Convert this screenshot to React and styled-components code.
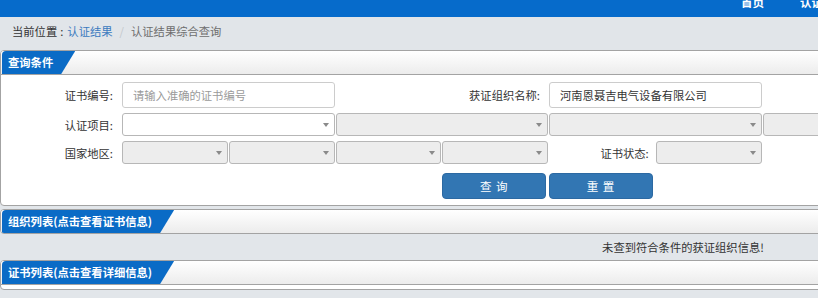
import React from "react";
import styled, { createGlobalStyle } from "styled-components";

const Global = createGlobalStyle`
  html, body { margin: 0; padding: 0; overflow: hidden; background: #e2e6ea; }
  body { font-family: "Noto Sans CJK SC", "Microsoft YaHei", "Liberation Sans", sans-serif; font-size: 11.3px; color: #333; }
  * { box-sizing: border-box; }
`;

const Page = styled.div`
  width: 1366px;
  background: #e2e6ea;
  min-height: 298px;
`;

const TopBar = styled.div`
  height: 17px;
  background: #066bcb;
  overflow: hidden;
  display: flex;
  padding-left: 723px;
`;

const NavItem = styled.div`
  color: #fff;
  font-size: 11.5px;
  font-weight: bold;
  line-height: 16px;
  margin-top: -6px;
  padding: 0 18px;
  white-space: nowrap;
`;

const Crumbs = styled.div`
  height: 33px;
  display: flex;
  align-items: center;
  padding: 0 0 5px 12px;
  background: #e1e5e9;
  color: #333;
  line-height: 16px;
`;

const Colon = styled.span`
  padding: 0 4px 0 3px;
`;

const CrumbLink = styled.span`
  color: #3b7bbf;
`;

const Sep = styled.span`
  color: #c4c8cc;
  margin: 0 7px;
`;

const CrumbCurrent = styled.span`
  color: #6e6e6e;
`;

const Panel = styled.div`
  border: 1px solid #a3a3a3;
  border-radius: 4px;
  background: #fff;
  margin-bottom: ${(p) => p.$mb || 0}px;
  overflow: hidden;
`;

const PanelHead = styled.div`
  height: ${(p) => (p.$last ? 23 : 24)}px;
  border-bottom: ${(p) => (p.$last ? "none" : "1px solid #a3a3a3")};
  background: linear-gradient(#ffffff, #ececec);
  display: flex;
`;

const Tab = styled.div`
  height: 23px;
  margin-left: 1px;
  padding: 0 22px 0 6px;
  background: #0a6bc6;
  color: #fff;
  font-weight: bold;
  line-height: 23px;
  white-space: nowrap;
  border-top-left-radius: 4px;
  clip-path: polygon(0 0, 100% 0, calc(100% - 14px) 100%, 0 100%);
`;

const Body = styled.div`
  padding: ${(p) => p.$pad || "7px 0 6px 0"};
`;

const FormGrid = styled.div`
  display: grid;
  grid-template-columns: 121px repeat(8, 106.75px);
  grid-template-rows: 26px 23px 23px 30px;
  row-gap: 5px;
`;

const Label = styled.div`
  grid-column: span ${(p) => p.$span || 1};
  display: flex;
  align-items: center;
  justify-content: flex-end;
  padding-right: ${(p) => p.$pr || 9}px;
  color: #333;
  white-space: nowrap;
`;

const TextInput = styled.input`
  grid-column: span ${(p) => p.$span || 2};
  height: 26px;
  width: calc(100% - 1px);
  border: 1px solid #cccccc;
  border-radius: 3px;
  padding: 0 10px;
  font: inherit;
  color: #333;
  outline: none;
  &::placeholder { color: #9a9a9a; }
`;

const SelectWrap = styled.div`
  grid-column: span ${(p) => p.$span || 2};
  position: relative;
  height: 23px;
  margin-right: 1px;
  &::after {
    content: "";
    position: absolute;
    right: 6px;
    top: 10px;
    border-left: 3px solid transparent;
    border-right: 3px solid transparent;
    border-top: 4px solid #8a8a8a;
    pointer-events: none;
  }
`;

const Select = styled.select`
  appearance: none;
  -webkit-appearance: none;
  width: 100%;
  height: 23px;
  border: 1px solid #b7b7b7;
  border-radius: 3px;
  background: ${(p) => (p.disabled ? "#ededed" : "#fff")};
  font: inherit;
  opacity: 1;
  color: #333;
`;

const Spacer = styled.div`
  grid-column: span ${(p) => p.$span || 1};
`;

const Button = styled.button`
  align-self: end;
  height: 26px;
  width: 104px;
  background: #3276b3;
  border: 1px solid #2c69a2;
  border-radius: 4px;
  color: #fff;
  font: inherit;
  font-size: 11.5px;
  letter-spacing: 1px;
  padding: 0;
`;

const Message = styled.div`
  height: 26px;
  display: flex;
  align-items: center;
  justify-content: center;
  color: #333;
`;

function Sel({ span, disabled }) {
  return (
    <SelectWrap $span={span}>
      <Select disabled={disabled}>
        <option></option>
      </Select>
    </SelectWrap>
  );
}

export default function App() {
  return (
    <>
      <Global />
      <Page>
        <TopBar>
          <NavItem>首页</NavItem>
          <NavItem>认证结果</NavItem>
          <NavItem>认证机构</NavItem>
        </TopBar>
        <Crumbs>
          当前位置<Colon>:</Colon>
          <CrumbLink>认证结果</CrumbLink>
          <Sep>/</Sep>
          <CrumbCurrent>认证结果综合查询</CrumbCurrent>
        </Crumbs>

        <Panel $mb={3}>
          <PanelHead>
            <Tab>查询条件</Tab>
          </PanelHead>
          <Body>
            <FormGrid>
              <Label>证书编号:</Label>
              <TextInput placeholder="请输入准确的证书编号" />
              <Label $span={2}>获证组织名称:</Label>
              <TextInput defaultValue="河南恩聂吉电气设备有限公司" />
              <Spacer $span={2} />

              <Label>认证项目:</Label>
              <Sel span={2} />
              <Sel span={2} disabled />
              <Sel span={2} disabled />
              <Sel span={2} disabled />

              <Label>国家地区:</Label>
              <Sel span={1} disabled />
              <Sel span={1} disabled />
              <Sel span={1} disabled />
              <Sel span={1} disabled />
              <Label $pr={7}>证书状态:</Label>
              <Sel span={1} disabled />
              <Spacer $span={2} />

              <Spacer $span={4} />
              <Button>查 询</Button>
              <Button>重 置</Button>
            </FormGrid>
          </Body>
        </Panel>

        <Panel>
          <PanelHead $last>
            <Tab>组织列表(点击查看证书信息)</Tab>
          </PanelHead>
        </Panel>

        <Message>未查到符合条件的获证组织信息!</Message>

        <Panel>
          <PanelHead>
            <Tab>证书列表(点击查看详细信息)</Tab>
          </PanelHead>
          <Body $pad="4px 0 0 0" />
        </Panel>
      </Page>
    </>
  );
}
